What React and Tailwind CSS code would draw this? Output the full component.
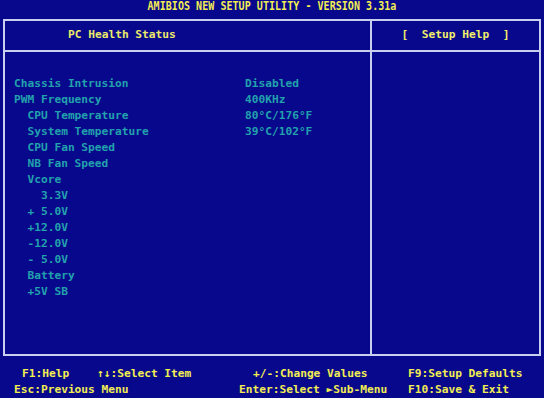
const mono = "font-['DejaVu_Sans_Mono','Liberation_Mono',monospace] font-bold";

const rows = [
  { label: "Chassis Intrusion", value: "Disabled" },
  { label: "PWM Frequency", value: "400KHz" },
  { label: "  CPU Temperature", value: "80°C/176°F" },
  { label: "  System Temperature", value: "39°C/102°F" },
  { label: "  CPU Fan Speed" },
  { label: "  NB Fan Speed" },
  { label: "  Vcore" },
  { label: "    3.3V" },
  { label: "  + 5.0V" },
  { label: "  +12.0V" },
  { label: "  -12.0V" },
  { label: "  - 5.0V" },
  { label: "  Battery" },
  { label: "  +5V SB" },
];

export default function App() {
  return (
    <div className={`w-[544px] h-[400px] bg-white overflow-hidden ${mono}`}>
      <div className="h-[398px] bg-[#08088c] flex flex-col">
        <div className="h-[19px] pt-[1px] flex justify-center">
          <span className="text-[10px] leading-[11px] text-[#f2ee52] scale-y-[1.15] tracking-[0.05px]">
            AMIBIOS NEW SETUP UTILITY - VERSION 3.31a
          </span>
        </div>

        <div className="ml-[3px] w-[538px] h-[337px] border-2 border-[#c9cfee] flex">
          <div className="w-[365px] flex flex-col">
            <div className="h-[31px] border-b-2 border-[#c9cfee] flex items-center pl-[63px] text-[11.2px] text-[#ecea6a]">
              PC Health Status
            </div>
            <div className="pt-[24px] pl-[9px] flex flex-col text-[11.2px] leading-[16px] text-[#22a2ac]">
              {rows.map((r, i) => (
                <div key={i} className="flex">
                  <span className="w-[231px] whitespace-pre">{r.label}</span>
                  <span>{r.value}</span>
                </div>
              ))}
            </div>
          </div>
          <div className="flex-1 border-l-2 border-[#c9cfee] flex flex-col">
            <div className="h-[31px] border-b-2 border-[#c9cfee] flex items-center justify-center text-[11.2px] text-[#f0ee6a] whitespace-pre">
              {"[  Setup Help  ]"}
            </div>
          </div>
        </div>

        <div className="mt-[10px] flex flex-col text-[11.2px] leading-[16px] text-[#f2ee52] whitespace-pre">
          <div className="flex pl-[22px]">
            <span className="w-[75px]">F1:Help</span>
            <span className="w-[156px]">↑↓:Select Item</span>
            <span className="w-[155px]">+/-:Change Values</span>
            <span>F9:Setup Defaults</span>
          </div>
          <div className="flex pl-[14px]">
            <span className="w-[225px]">Esc:Previous Menu</span>
            <span className="w-[169px]">Enter:Select ►Sub-Menu</span>
            <span>F10:Save &amp; Exit</span>
          </div>
        </div>
      </div>
    </div>
  );
}
